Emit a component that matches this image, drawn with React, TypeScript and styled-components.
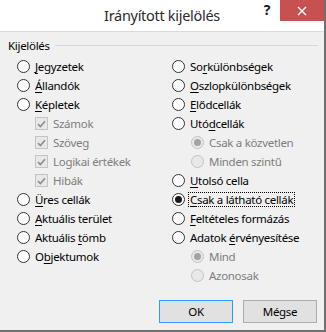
import React from "react";
import styled, { createGlobalStyle, css } from "styled-components";

const GlobalStyle = createGlobalStyle`
  html, body { margin: 0; padding: 0; background: #f0f0f0; }
  body { font-family: "Noto Sans", "Open Sans", sans-serif; }
  * { box-sizing: border-box; }
`;

const FONT = `"Noto Sans", "Open Sans", sans-serif`;

const Window = styled.div`
  width: 326px;
  height: 332px;
  display: flex;
  flex-direction: column;
  background: #f0f0f0;
  border-right: 2px solid #6f6f6f;
  border-bottom: 2px solid #6f6f6f;
  font-family: ${FONT};
  font-size: 11.5px;
  letter-spacing: -0.3px;
  color: #000;
`;

const TitleBar = styled.div`
  height: 31px;
  background: #fff;
  display: grid;
  grid-template-columns: 1fr auto 1fr;
  align-items: start;
`;

const Title = styled.div`
  grid-column: 2;
  font-size: 14.5px;
  line-height: 31px;
  color: #2b2b2b;
  letter-spacing: -0.3px;
`;

const Controls = styled.div`
  grid-column: 3;
  justify-self: end;
  display: flex;
  align-items: flex-start;
`;

const HelpButton = styled.div`
  width: 26px;
  height: 21px;
  display: flex;
  align-items: center;
  justify-content: center;
  font-weight: 700;
  font-size: 14px;
  color: #1a1a1a;
  padding-bottom: 3px;
`;

const CloseButton = styled.div`
  width: 44px;
  height: 21px;
  background: #c75050;
  display: flex;
  align-items: center;
  justify-content: center;
`;

const Body = styled.div`
  flex: 1;
  border-top: 1px solid #dadada;
  display: flex;
  flex-direction: column;
`;

const GroupHeader = styled.div`
  margin: 6px 6px 0 8px;
  height: 14px;
  display: flex;
  align-items: center;
  gap: 5px;
`;

const GroupLine = styled.div`
  flex: 1;
  height: 1px;
  background: #d8d8d8;
`;

const Grid = styled.div`
  margin-top: 5px;
  padding-left: 17px;
  display: grid;
  grid-template-columns: 155px 1fr;
`;

const Column = styled.div`
  display: flex;
  flex-direction: column;
`;

const Row = styled.div<{ $indent?: number }>`
  height: 19px;
  display: flex;
  align-items: center;
  gap: 5px;
  padding-left: ${(p) => p.$indent ?? 0}px;
  white-space: nowrap;
`;

const Label = styled.span<{ $disabled?: boolean; $focus?: boolean }>`
  color: ${(p) => (p.$disabled ? "#7d7d7d" : "#000")};
  line-height: 13px;
  ${(p) =>
    p.$focus &&
    css`
      outline: 1px dotted #000;
      outline-offset: 0px;
      margin-left: -1px;
      padding: 0 1px;
    `}
  u {
    text-decoration: underline;
    text-underline-offset: 2px;
  }
`;

const RadioCircle = styled.span<{ $disabled?: boolean; $checked?: boolean }>`
  width: 13px;
  height: 13px;
  flex: none;
  border-radius: 50%;
  border: 1px solid ${(p) => (p.$disabled ? "#c2c2c2" : "#333")};
  background: ${(p) => (p.$disabled ? "#e8e8e8" : "#fff")};
  display: flex;
  align-items: center;
  justify-content: center;
  &::after {
    content: "";
    display: ${(p) => (p.$checked ? "block" : "none")};
    width: 7px;
    height: 7px;
    border-radius: 50%;
    background: ${(p) => (p.$disabled ? "#a3a3a3" : "#1a1a1a")};
  }
`;

const CheckBox = styled.span`
  width: 13px;
  height: 13px;
  flex: none;
  border: 1px solid #c4c4c4;
  background: #e8e8e8;
  display: flex;
  align-items: center;
  justify-content: center;
`;

const Footer = styled.div`
  margin-top: auto;
  padding: 0 7px 7px 0;
  display: flex;
  justify-content: flex-end;
  gap: 10px;
`;

const Button = styled.div<{ $default?: boolean }>`
  width: 74px;
  height: 23px;
  background: #e1e1e1;
  border: 1px solid ${(p) => (p.$default ? "#3399ff" : "#adadad")};
  display: flex;
  align-items: center;
  justify-content: center;
`;

type Item = {
  kind: "radio" | "check";
  label: React.ReactNode;
  indent?: number;
  disabled?: boolean;
  checked?: boolean;
  focus?: boolean;
};

const u = (s: string) => <u>{s}</u>;

const left: Item[] = [
  { kind: "radio", label: <>{u("J")}egyzetek</> },
  { kind: "radio", label: <>{u("Á")}llandók</> },
  { kind: "radio", label: <>{u("K")}épletek</> },
  { kind: "check", label: "Számok", indent: 18, disabled: true },
  { kind: "check", label: "Szöveg", indent: 18, disabled: true },
  { kind: "check", label: "Logikai értékek", indent: 18, disabled: true },
  { kind: "check", label: "Hibák", indent: 18, disabled: true },
  { kind: "radio", label: <>{u("Ü")}res cellák</> },
  { kind: "radio", label: <>{u("A")}ktuális terület</> },
  { kind: "radio", label: <>Aktuális {u("t")}ömb</> },
  { kind: "radio", label: <>O{u("b")}jektumok</> },
];

const right: Item[] = [
  { kind: "radio", label: <>So{u("r")}különbségek</> },
  { kind: "radio", label: <>{u("O")}szlopkülönbségek</> },
  { kind: "radio", label: <>{u("E")}lődcellák</> },
  { kind: "radio", label: <>Utó{u("d")}cellák</> },
  { kind: "radio", label: "Csak a közvetlen", indent: 19, disabled: true, checked: true },
  { kind: "radio", label: "Minden szintű", indent: 19, disabled: true },
  { kind: "radio", label: <>{u("U")}tolsó cella</> },
  { kind: "radio", label: <>{u("C")}sak a látható cellák</>, checked: true, focus: true },
  { kind: "radio", label: <>{u("F")}eltételes formázás</> },
  { kind: "radio", label: <>Adatok {u("é")}rvényesítése</> },
  { kind: "radio", label: "Mind", indent: 19, disabled: true, checked: true },
  { kind: "radio", label: "Azonosak", indent: 19, disabled: true },
];

const CheckMark = () => (
  <svg width="9" height="8" viewBox="0 0 9 8">
    <path d="M1 4.2 L3.4 6.5 L8 1.2" fill="none" stroke="#8e8e8e" strokeWidth="1.7" />
  </svg>
);

const Option = ({ item }: { item: Item }) => (
  <Row $indent={item.indent}>
    {item.kind === "radio" ? (
      <RadioCircle $disabled={item.disabled} $checked={item.checked} />
    ) : (
      <CheckBox>
        <CheckMark />
      </CheckBox>
    )}
    <Label $disabled={item.disabled} $focus={item.focus}>
      {item.label}
    </Label>
  </Row>
);

export default function App() {
  return (
    <>
      <GlobalStyle />
      <Window>
        <TitleBar>
          <Title>Irányított kijelölés</Title>
          <Controls>
            <HelpButton>?</HelpButton>
            <CloseButton>
              <svg width="10" height="10" viewBox="0 0 10 10">
                <path d="M1 1 L9 9 M9 1 L1 9" stroke="#fff" strokeWidth="1.4" />
              </svg>
            </CloseButton>
          </Controls>
        </TitleBar>
        <Body>
          <GroupHeader>
            <span>Kijelölés</span>
            <GroupLine />
          </GroupHeader>
          <Grid>
            <Column>
              {left.map((it, i) => (
                <Option key={i} item={it} />
              ))}
            </Column>
            <Column>
              {right.map((it, i) => (
                <Option key={i} item={it} />
              ))}
            </Column>
          </Grid>
          <Footer>
            <Button $default>OK</Button>
            <Button>Mégse</Button>
          </Footer>
        </Body>
      </Window>
    </>
  );
}
